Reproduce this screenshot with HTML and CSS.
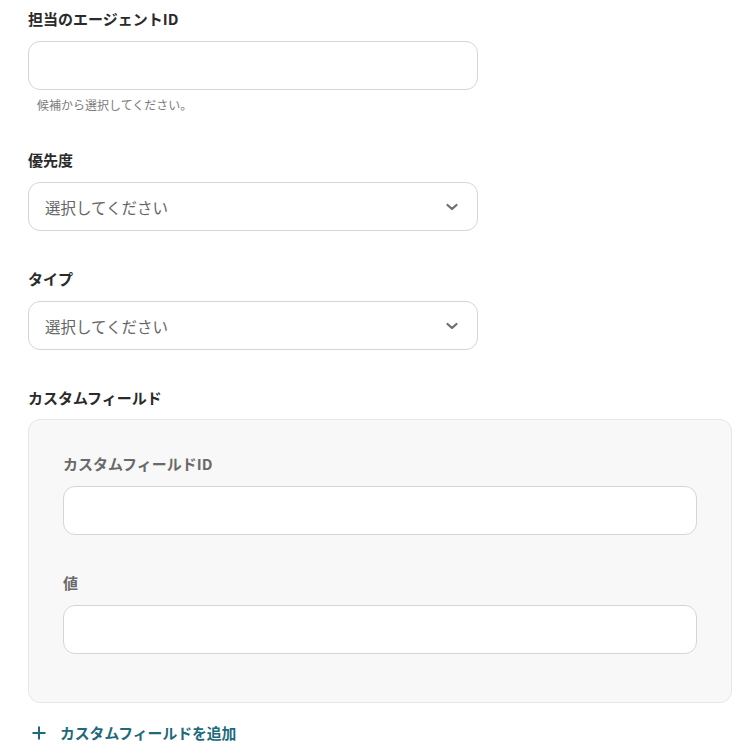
FILE: index.html
```html
<!DOCTYPE html>
<html lang="ja">
<head>
<meta charset="utf-8">
<link rel="stylesheet" href="styles.css">
</head>
<body>
<div class="form">
  <div class="field">
    <div class="label">担当のエージェントID</div>
    <div class="input"></div>
    <div class="help">候補から選択してください。</div>
  </div>
  <div class="field">
    <div class="label">優先度</div>
    <div class="input select">
      <span class="placeholder">選択してください</span>
      <svg class="chev" width="14" height="10" viewBox="0 0 14 10"><path d="M2.5 3 L7 7 L11.5 3" fill="none" stroke="#6f6f6f" stroke-width="2.3" stroke-linecap="round" stroke-linejoin="round"/></svg>
    </div>
  </div>
  <div class="field">
    <div class="label">タイプ</div>
    <div class="input select">
      <span class="placeholder">選択してください</span>
      <svg class="chev" width="14" height="10" viewBox="0 0 14 10"><path d="M2.5 3 L7 7 L11.5 3" fill="none" stroke="#6f6f6f" stroke-width="2.3" stroke-linecap="round" stroke-linejoin="round"/></svg>
    </div>
  </div>
  <div class="field wide">
    <div class="label main">カスタムフィールド</div>
    <div class="panel">
      <div class="subfield">
        <div class="label sub">カスタムフィールドID</div>
        <div class="input"></div>
      </div>
      <div class="subfield">
        <div class="label sub">値</div>
        <div class="input"></div>
      </div>
    </div>
    <div class="add">
      <svg width="14" height="14" viewBox="0 0 14 14"><path d="M7 0.5 V13.5 M0.5 7 H13.5" stroke="#1d6a7c" stroke-width="2" fill="none"/></svg>
      <span>カスタムフィールドを追加</span>
    </div>
  </div>
</div>
</body>
</html>
```

FILE: styles.css
```css
* { box-sizing: border-box; }
body {
  margin: 0;
  background: #ffffff;
  font-family: "Noto Sans CJK JP", "Noto Sans", sans-serif;
  color: #2d2d2d;
}
.form {
  padding: 8px 0 0 28px;
  width: 732px;
}
.field {
  width: 450px;
  margin-bottom: 37px;
}
.field.wide {
  width: 704px;
  margin-bottom: 0;
}
.label {
  font-size: 15px;
  font-weight: 700;
  line-height: 21px;
  margin-bottom: 12px;
  color: #2a2a2a;
}
.label.main {
  margin-bottom: 11px;
}
.label.sub {
  color: #6a6a6a;
}
.input {
  height: 49px;
  border: 1px solid #d3d5da;
  border-radius: 12px;
  background: #ffffff;
}
.select {
  display: flex;
  align-items: center;
  justify-content: space-between;
  padding: 0 18px 0 16px;
}
.placeholder {
  font-size: 15.5px;
  color: #666666;
  line-height: 22px;
}
.chev { display: block; }
.help {
  margin-top: 7px;
  padding-left: 9px;
  font-size: 12px;
  line-height: 15px;
  color: #7c7c7c;
}
.panel {
  background: #f8f8f8;
  border: 1px solid #e6e6e6;
  border-radius: 12px;
  padding: 33px 34px 48px;
}
.subfield + .subfield {
  margin-top: 37px;
}
.add {
  margin-top: 19px;
  display: flex;
  align-items: center;
  gap: 14px;
  padding-left: 4px;
  color: #1d6a7c;
  font-size: 14.8px;
  font-weight: 700;
  line-height: 21px;
}
.add svg { display: block; }
```
